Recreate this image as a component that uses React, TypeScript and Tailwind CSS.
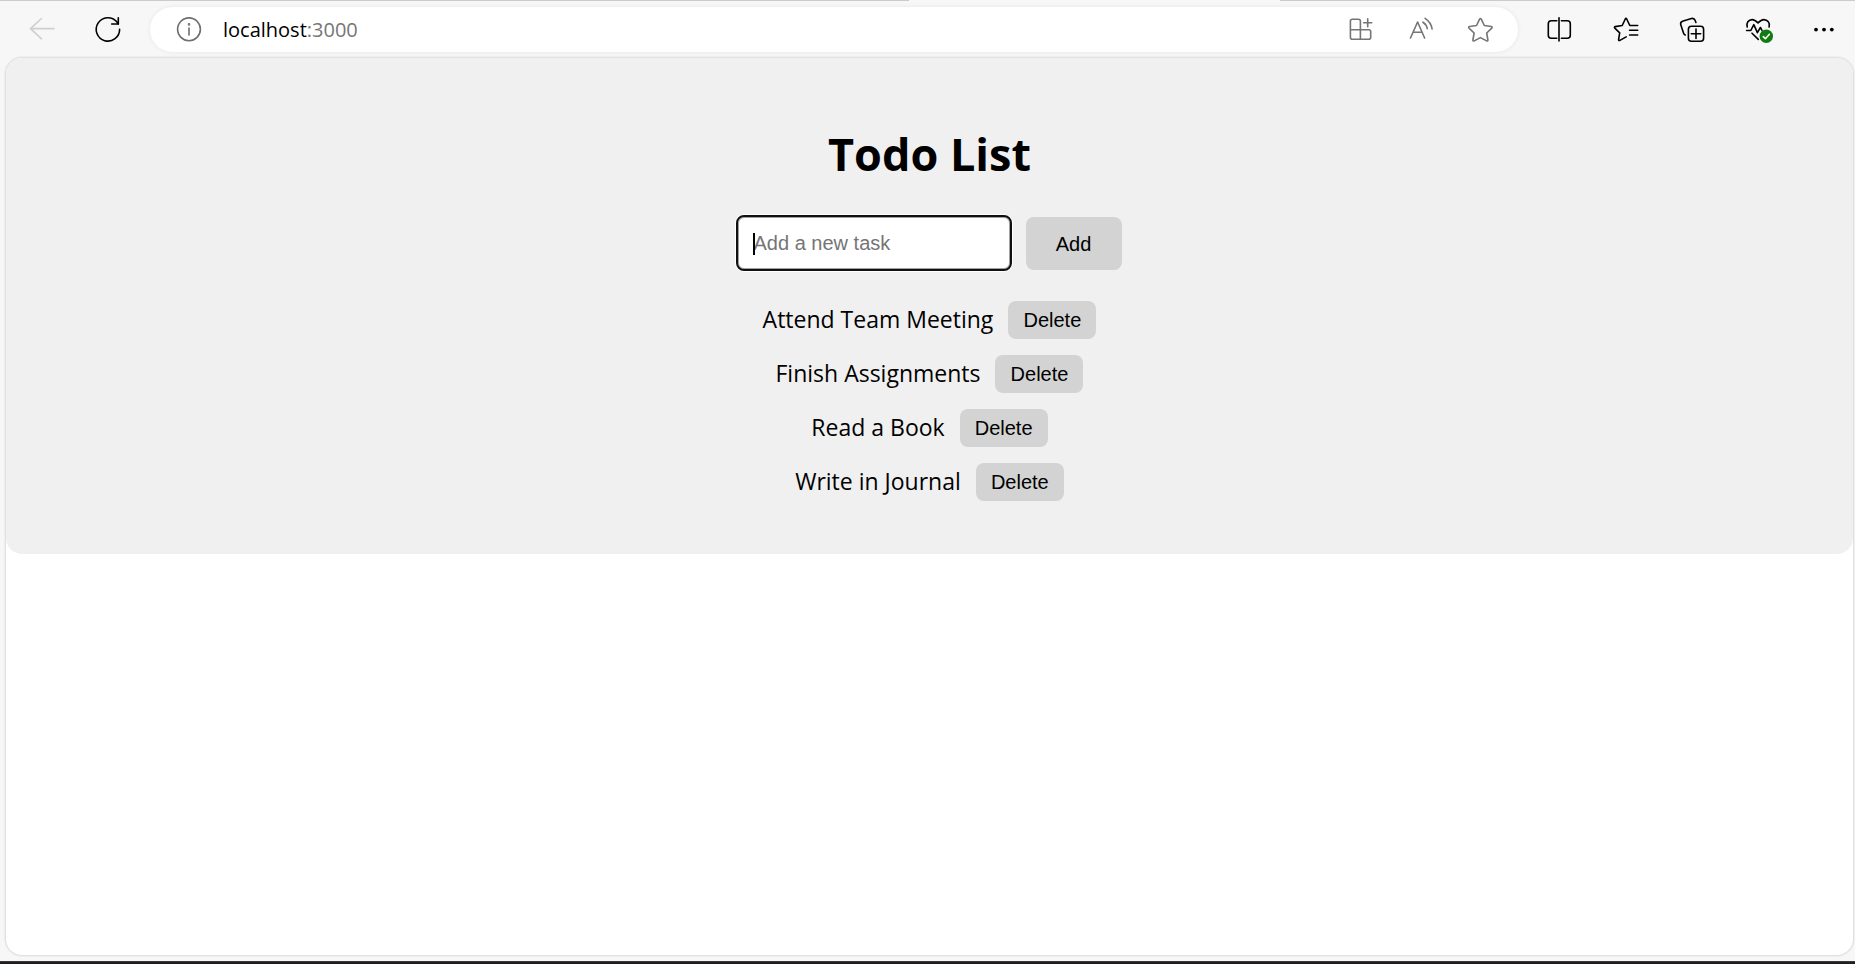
import { useState } from "react";
import type { FormEvent, ReactNode } from "react";

const INITIAL_TASKS = ["Attend Team Meeting", "Finish Assignments", "Read a Book", "Write in Journal"];

function Icon({ children, className = "" }: { children: ReactNode; className?: string }) {
  return (
    <svg
      viewBox="0 0 28 29"
      aria-hidden="true"
      fill="none"
      stroke="currentColor"
      strokeWidth="1.6"
      strokeLinecap="round"
      strokeLinejoin="round"
      className={`h-[29px] w-[28px] shrink-0 overflow-visible ${className}`}
    >
      {children}
    </svg>
  );
}

function ToolButton({ label, children, narrow = false }: { label: string; children: ReactNode; narrow?: boolean }) {
  return (
    <button
      type="button"
      aria-label={label}
      className={`flex h-[45px] shrink-0 items-center justify-center ${narrow ? "w-[60px]" : "w-[66px]"}`}
    >
      {children}
    </button>
  );
}

function Toolbar() {
  return (
    <header className="flex h-[57px] items-center pl-[9px] text-black">
      <ToolButton label="Back">
        <Icon className="text-[#cfcfcf]">
          <path d="M26 13.6H2.5M13.5 3.5 2.5 13.6l11 10.2" />
        </Icon>
      </ToolButton>
      <ToolButton label="Refresh">
        <Icon>
          <path d="M25.6 14.2A11.7 11.7 0 1 1 22.8 6.800L24.300 9" />
          <path d="M24.300 2.800V9h-6.600" />
        </Icon>
      </ToolButton>
      <div className="mr-[7px] ml-[9px] flex h-[45px] min-w-0 flex-1 items-center rounded-full bg-white pr-[7px] pl-[25px] shadow-[0_0_5px_rgba(0,0,0,0.07)]">
        <Icon className="text-[#6e6e6e]">
          <circle cx="14" cy="14.3" r="11.4" />
          <path d="M14 13v7" />
          <circle cx="14" cy="9.4" r="0.5" />
        </Icon>
        <p className="ml-5 flex-1 text-xl text-black">
          localhost<span className="text-[#767676]">:3000</span>
        </p>
        <div className="flex text-[#757575]">
          <ToolButton label="Install app" narrow>
            <Icon>
              <path d="M13.4 14.7V6.3a2 2 0 0 0-2-2h-6a2 2 0 0 0-2 2v16a2 2 0 0 0 2 2h16.300a2 2 0 0 0 2-2v-5.600a2 2 0 0 0-2-2H3.400M13.400 14.700v9.600M20.700 3.700v8M16.700 7.700h8" />
            </Icon>
          </ToolButton>
          <ToolButton label="Read aloud" narrow>
            <Icon>
              <path d="M3.500 23 10.600 7l7 16M6.200 17.200H15M15.900 7.200q3.700 2.300 4.400 6.500M18.100 3.300q6 3.900 7 10.700" />
            </Icon>
          </ToolButton>
          <ToolButton label="Add to favorites" narrow>
            <Icon>
              <path d="M12.600 4.200q.9-1.300 1.700 0l3 6.300 6.900 1q1.600.4.600 1.600l-5.100 4.900 1.200 7q.1 1.400-1.300.9l-6.200-3.300-6.200 3.300q-1.400.5-1.300-.9l1.200-7-5.100-4.900q-1-1.200.6-1.600l6.900-1z" />
            </Icon>
          </ToolButton>
        </div>
      </div>
      <ToolButton label="Split screen">
        <Icon>
          <path d="M15 2.800V26M12.800 5.700H7.300a3 3 0 0 0-3 3v11.500a3 3 0 0 0 3 3h5.500M17.400 5.700h5.900a3 3 0 0 1 3 3v11.500a3 3 0 0 1-3 3h-5.900" />
        </Icon>
      </ToolButton>
      <ToolButton label="Favorites">
        <Icon>
          <path d="M27.700 10.500H19.800L16.700 4q-.7-1.200-1.400 0l-3.100 6.500-7 1.100q-1.300.4-.4 1.500l4.900 4.700-1.100 6.700q0 1.500 1.300.9l6.300-3.500M19.600 15.200h8.100M19.600 20h8.100" />
        </Icon>
      </ToolButton>
      <ToolButton label="Collections">
        <Icon>
          <rect x="12.400" y="11.200" width="15.200" height="15" rx="3" />
          <path d="M20 14v9.400M15.300 18.700h9.400M9.200 20Q7.900 19.300 7.500 18L4.700 9.600Q4.200 7.200 6.500 6.300L15.400 3.500Q18.300 2.900 19.200 5.500l.7 2" />
        </Icon>
      </ToolButton>
      <ToolButton label="Browser essentials">
        <Icon>
          <path d="M5.200 12C4 8 6.500 4.600 10.200 4.600q2.500 0 5.800 3.300 3.300-3.300 5.800-3.300c3.700 0 6.600 3.400 5.300 7.400M4.600 15.500h4.200l3-5.800 3.600 8 3-5.200 1.600 2.800M10 18.200l6.300 6.200" />
          <circle cx="24.300" cy="21.300" r="6.700" fill="#0f7b10" stroke="none" />
          <path d="m21.300 21.600 2.100 2.100 4-4.400" stroke="#fff" />
        </Icon>
      </ToolButton>
      <ToolButton label="Settings and more">
        <Icon>
          <g fill="currentColor" stroke="none">
            <circle cx="8" cy="14.600" r="1.900" />
            <circle cx="16" cy="14.600" r="1.900" />
            <circle cx="23.800" cy="14.600" r="1.900" />
          </g>
        </Icon>
      </ToolButton>
    </header>
  );
}

function TodoList() {
  const [tasks, setTasks] = useState(INITIAL_TASKS);
  const [draft, setDraft] = useState("");

  function addTask(event: FormEvent) {
    event.preventDefault();
    const name = draft.trim();
    if (name) {
      setTasks([...tasks, name]);
      setDraft("");
    }
  }

  return (
    <section className="flex flex-col items-center rounded-2xl bg-[#f0f0f0] px-4 pt-[64px] pb-[53px] text-black">
      <h1 className="text-[45px] leading-[64px] font-bold">Todo List</h1>
      <form
        onSubmit={addTask}
        className="mt-[31px] flex gap-4 font-['Liberation_Sans',Arial,sans-serif] text-xl"
      >
        <div className="relative">
          <input
            aria-label="New task"
            placeholder="Add a new task"
            value={draft}
            onChange={(event) => setDraft(event.target.value)}
            className="block h-[52px] w-[272px] rounded-md border border-[#a0a0a0] bg-white px-[15px] shadow-[0_0_0_3px_#fff] outline-2 outline-[#101010] placeholder:text-[#757575]"
          />
          {draft === "" && <span className="absolute top-4 left-[15px] h-[22px] w-[2px] bg-black" />}
        </div>
        <button type="submit" className="h-[53px] w-[96px] rounded-lg bg-[#d3d3d3]">
          Add
        </button>
      </form>
      <ul className="mt-[31px] flex flex-col items-center gap-4">
        {tasks.map((task, index) => (
          <li key={index} className="flex items-start gap-[15px]">
            <span className="text-[23px] leading-9">{task}</span>
            <button
              type="button"
              onClick={() => setTasks(tasks.filter((_, i) => i !== index))}
              className="h-[38px] w-[88px] rounded-lg bg-[#d3d3d3] font-['Liberation_Sans',Arial,sans-serif] text-xl"
            >
              Delete
            </button>
          </li>
        ))}
      </ul>
    </section>
  );
}

export default function App() {
  return (
    <div className="flex min-h-screen flex-col border-b-2 border-[#201c20] bg-[#f7f7f7] font-['Segoe_UI','Open_Sans','Noto_Sans',sans-serif]">
      <div className="flex h-px justify-between">
        <div className="w-[49%] bg-[#cbcbcb]" />
        <div className="w-[31%] bg-[#cbcbcb]" />
      </div>
      <Toolbar />
      <main className="mr-[2px] mb-[6px] ml-[6px] flex-1 rounded-2xl bg-white shadow-[0_0_2px_1px_rgba(0,0,0,0.12)]">
        <TodoList />
      </main>
      <div className="h-px bg-[#3b393a]" />
    </div>
  );
}
